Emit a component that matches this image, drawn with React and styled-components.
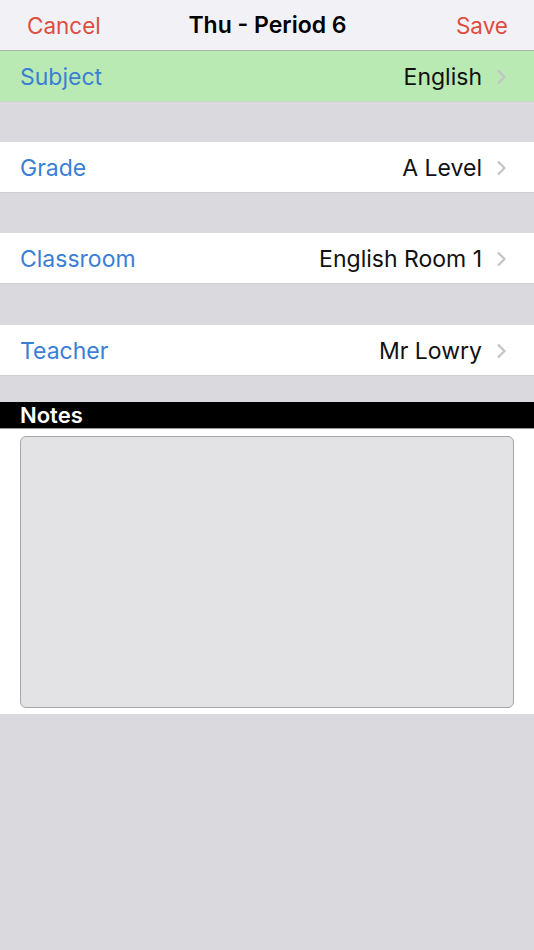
import React from "react";
import styled, { createGlobalStyle } from "styled-components";

const Global = createGlobalStyle`
  html, body {
    margin: 0;
    padding: 0;
    background: #dadade;
    font-family: Inter, "Liberation Sans", Arial, sans-serif;
  }
`;

const Screen = styled.div`
  width: 534px;
  min-height: 950px;
  background: #dadade;
  display: flex;
  flex-direction: column;
`;

const NavBar = styled.header`
  height: 50px;
  background: #f2f2f6;
  border-bottom: 1px solid #a9b3a8;
  display: grid;
  grid-template-columns: 1fr auto 1fr;
  align-items: center;
  padding: 0 26px 0 27px;
  box-sizing: content-box;
`;

const NavButton = styled.button`
  border: 0;
  background: none;
  padding: 0;
  font: inherit;
  font-size: 22.5px;
  color: #dd4d43;
  justify-self: ${p => (p.$right ? "end" : "start")};
`;

const Title = styled.h1`
  margin: 0;
  font-size: 23px;
  font-weight: 600;
  color: #000;
`;

const Row = styled.div`
  height: 51px;
  box-sizing: border-box;
  background: ${p => (p.$highlight ? "#b9eab3" : "#ffffff")};
  border-bottom: 1px solid ${p => (p.$highlight ? "#c9d6c6" : "#d0d0d4")};
  display: flex;
  align-items: center;
  padding: 1px 28px 0 20px;
`;

const Label = styled.span`
  flex: 1;
  font-size: 23px;
  color: #3b7ed6;
`;

const Value = styled.span`
  font-size: 23px;
  color: #111;
  margin-right: 14px;
`;

const Gap = styled.div`
  height: ${p => p.$h}px;
`;

const Chevron = () => (
  <svg width="10" height="16" viewBox="0 0 10 16">
    <path d="M2 1.5 L8.5 8 L2 14.5" fill="none" stroke="#c2c2c7" strokeWidth="2.2" />
  </svg>
);

const SectionHeader = styled.div`
  height: 26px;
  background: #000;
  border-bottom: 1px solid #9a9a9e;
  color: #fff;
  font-size: 22px;
  font-weight: 600;
  display: flex;
  align-items: center;
  padding-left: 20px;
`;

const NotesPanel = styled.div`
  background: #fff;
  padding: 7px 20px 6px 20px;
`;

const NotesBox = styled.textarea`
  display: block;
  width: 494px;
  height: 272px;
  box-sizing: border-box;
  margin: 0;
  resize: none;
  background: #e3e3e6;
  border: 1.5px solid #a6a6a8;
  border-radius: 6px;
  font: inherit;
  font-size: 18px;
  outline: none;
`;

const fields = [
  { label: "Subject", value: "English", highlight: true },
  { label: "Grade", value: "A Level" },
  { label: "Classroom", value: "English Room 1" },
  { label: "Teacher", value: "Mr Lowry" }
];

export default function App() {
  return (
    <>
      <Global />
      <Screen>
        <NavBar>
          <NavButton>Cancel</NavButton>
          <Title>Thu - Period 6</Title>
          <NavButton $right>Save</NavButton>
        </NavBar>
        {fields.map((f, i) => (
          <React.Fragment key={f.label}>
            {i > 0 && <Gap $h={i === 3 ? 41 : 40} />}
            <Row $highlight={f.highlight}>
              <Label>{f.label}</Label>
              <Value>{f.value}</Value>
              <Chevron />
            </Row>
          </React.Fragment>
        ))}
        <Gap $h={26} />
        <SectionHeader>Notes</SectionHeader>
        <NotesPanel>
          <NotesBox />
        </NotesPanel>
      </Screen>
    </>
  );
}
